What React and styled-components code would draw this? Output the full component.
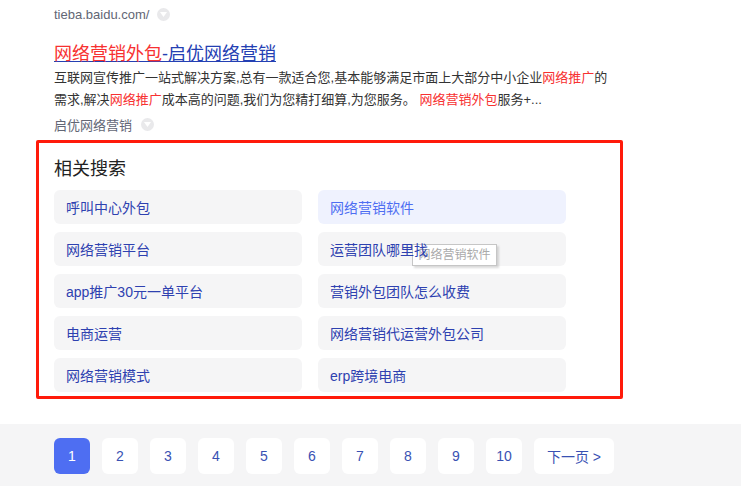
import styled, { createGlobalStyle } from "styled-components";

const Global = createGlobalStyle`
  html, body {
    margin: 0;
    padding: 0;
    background: #fff;
    font-family: "Liberation Sans", Arial, "Noto Sans CJK SC", sans-serif;
  }
  * { box-sizing: border-box; }
`;

const Page = styled.div`
  display: flex;
  flex-direction: column;
  min-height: 486px;
`;

const Results = styled.div`
  padding: 3px 0 0 54px;
  display: flex;
  flex-direction: column;
`;

const Meta = styled.div`
  display: flex;
  align-items: center;
  height: 22px;
  font-size: 13px;
  color: #626675;
  margin-top: ${p => p.$top || 0}px;
`;

const Drop = styled.span`
  display: inline-flex;
  align-items: center;
  justify-content: center;
  width: 13px;
  height: 13px;
  border-radius: 50%;
  background: #e9e9eb;
  margin-left: ${p => p.$gap || 8}px;
  svg { display: block; }
`;

const Title = styled.a`
  margin-top: 16px;
  font-size: 18px;
  line-height: 26px;
  color: #2440b3;
  text-decoration: underline;
  cursor: pointer;
`;

const Em = styled.em`
  font-style: normal;
  color: #f73131;
`;

const Desc = styled.div`
  font-size: 13px;
  line-height: 22px;
  color: #333;
  width: 558px;
`;

const Related = styled.div`
  margin: 5px 0 0 -18px;
  width: 587px;
  border: 3px solid #ff1a0a;
  border-radius: 2px;
  padding: 13px 0 4px 15px;
`;

const RelTitle = styled.div`
  font-size: 18px;
  line-height: 26px;
  color: #222;
  margin-bottom: 8px;
`;

const Grid = styled.div`
  display: grid;
  grid-template-columns: 248px 248px;
  column-gap: 16px;
  row-gap: 8px;
`;

const Cell = styled.a`
  position: relative;
  display: flex;
  align-items: center;
  height: 34px;
  padding-left: 12px;
  border-radius: 6px;
  font-size: 14px;
  color: ${p => (p.$hover ? "#4e6ef2" : "#2e41b0")};
  background: ${p => (p.$hover ? "#eff2fe" : "#f5f5f6")};
  cursor: pointer;
`;

const Label = styled.span`
  position: relative;
  z-index: 1;
`;

const Tip = styled.div`
  position: absolute;
  left: 94px;
  top: 12px;
  width: 85px;
  height: 22px;
  border: 1px solid #c6c6c6;
  background: #fff;
  box-shadow: 2px 2px 2px rgba(0, 0, 0, 0.15);
  font-size: 12px;
  line-height: 20px;
  color: #aaa;
  text-align: center;
`;

const Pager = styled.div`
  margin-top: 25px;
  flex: 1;
  background: #f5f5f6;
  display: flex;
  gap: 12px;
  padding: 14px 0 0 54px;
`;

const PageBtn = styled.a`
  display: flex;
  align-items: center;
  justify-content: center;
  height: 36px;
  min-width: ${p => (p.$wide ? 80 : 36)}px;
  border-radius: 6px;
  font-size: 14px;
  color: ${p => (p.$active ? "#fff" : "#3951b3")};
  background: ${p => (p.$active ? "#4e6ef2" : "#fff")};
  cursor: pointer;
`;

const DropIcon = ({ gap }) => (
  <Drop $gap={gap}>
    <svg width="7" height="5" viewBox="0 0 7 5">
      <path d="M0 0 H7 L3.5 5 Z" fill="#fff" />
    </svg>
  </Drop>
);

const items = [
  "呼叫中心外包",
  "网络营销软件",
  "网络营销平台",
  "运营团队哪里找",
  "app推广30元一单平台",
  "营销外包团队怎么收费",
  "电商运营",
  "网络营销代运营外包公司",
  "网络营销模式",
  "erp跨境电商",
];

export default function App() {
  return (
    <Page>
      <Global />
      <Results>
        <Meta>
          tieba.baidu.com/
          <DropIcon gap={8} />
        </Meta>
        <Title>
          <Em>网络营销外包</Em>-启优网络营销
        </Title>
        <Desc>
          互联网宣传推广一站式解决方案,总有一款适合您,基本能够满足市面上大部分中小企业<Em>网络推广</Em>的需求,解决<Em>网络推广</Em>成本高的问题,我们为您精打细算,为您服务。&nbsp;<Em>网络营销外包</Em>服务+...
        </Desc>
        <Meta $top={2}>
          启优网络营销
          <DropIcon gap={9} />
        </Meta>
        <Related>
          <RelTitle>相关搜索</RelTitle>
          <Grid>
            {items.map((t, i) => (
              <Cell key={t} $hover={i === 1}>
                <Label>{t}</Label>
                {i === 3 && <Tip>网络营销软件</Tip>}
              </Cell>
            ))}
          </Grid>
        </Related>
      </Results>
      <Pager>
        {[1, 2, 3, 4, 5, 6, 7, 8, 9, 10].map(n => (
          <PageBtn key={n} $active={n === 1}>
            {n}
          </PageBtn>
        ))}
        <PageBtn $wide>下一页 &gt;</PageBtn>
      </Pager>
    </Page>
  );
}
